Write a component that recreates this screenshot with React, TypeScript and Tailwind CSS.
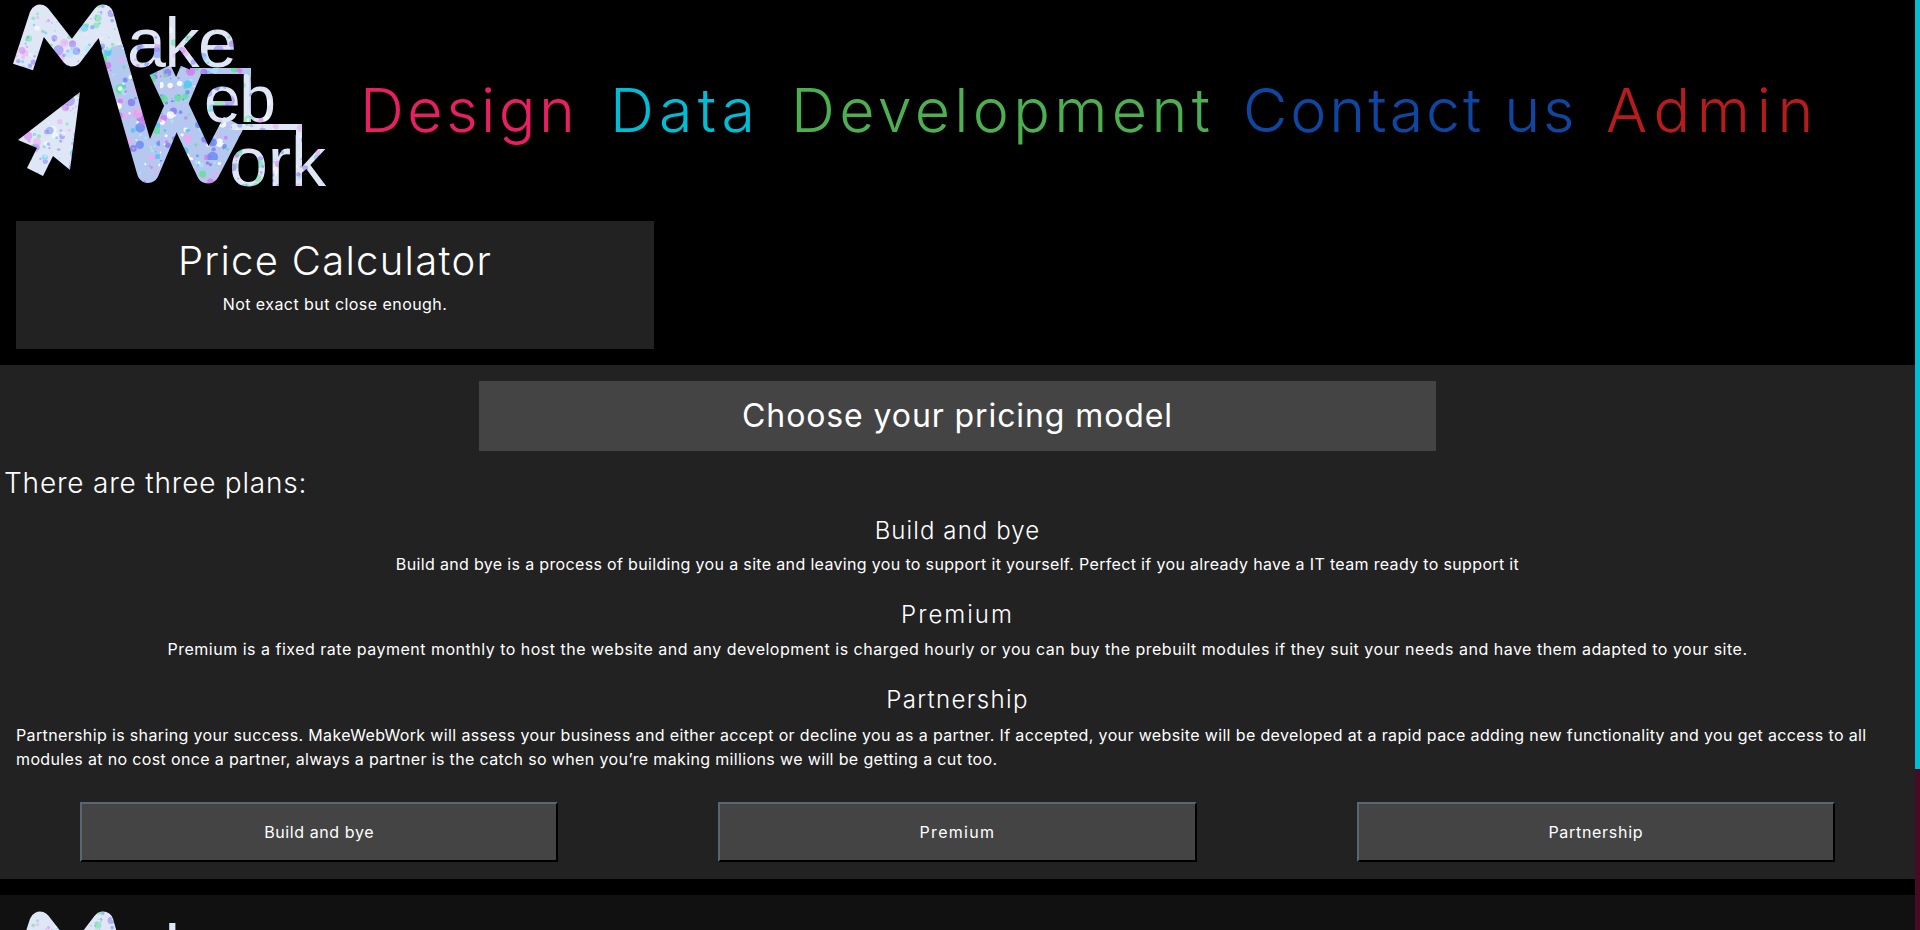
import { useId } from "react";

const navItems = [
  { label: "Design", color: "text-[#e91e63]", width: "w-[250px]", spacing: "tracking-[3.45px]" },
  { label: "Data", color: "text-[#00bcd4]", width: "w-[181px]", spacing: "tracking-[5.15px]" },
  { label: "Development", color: "text-[#4caf50]", width: "w-[452px]", spacing: "tracking-[4.3px]" },
  { label: "Contact us", color: "text-[#0d47a1]", width: "w-[363px]", spacing: "tracking-[2.9px]" },
  { label: "Admin", color: "text-[#b71c1c]", width: "w-[206px]", spacing: "tracking-[6.65px]" },
];

const plans = [
  { label: "Build and bye", spacing: "tracking-[0.6px]" },
  { label: "Premium", spacing: "tracking-[1.3px]" },
  { label: "Partnership", spacing: "tracking-[0.7px]" },
];

// deterministic paint speckle for the logo fill
const speckColors = ["#6f8cf5", "#5fe39a", "#d77cf0", "#4fc8f5", "#8a7cf5", "#ffffff", "#a9e8f5", "#f0a8f0"];
const noise = (n: number) => {
  const v = Math.sin(n * 12.9898) * 43758.5453;
  return v - Math.floor(v);
};
const specks = Array.from({ length: 520 }, (_, i) => ({
  x: noise(i + 1) * 160,
  y: noise(i + 1000) * 160,
  r: 0.7 + noise(i + 2000) * noise(i + 3000) * 5,
  color: speckColors[Math.floor(noise(i + 4000) * speckColors.length)],
}));

function Logo() {
  const id = useId();
  const fill = `url(#${id})`;
  const denseFill = `url(#${id}-dense)`;
  return (
    <svg width="330" height="192" viewBox="0 0 330 192" className="shrink-0 block">
      <defs>
        <pattern id={id} width="160" height="160" patternUnits="userSpaceOnUse">
          <rect width="160" height="160" fill="#dfe7f7" />
          {specks.map((s, i) => (
            <circle key={i} cx={s.x} cy={s.y} r={s.r} fill={s.color} opacity="0.55" />
          ))}
        </pattern>
        <pattern id={`${id}-dense`} width="160" height="160" patternUnits="userSpaceOnUse">
          <rect width="160" height="160" fill="#b4c8f0" />
          {specks.map((s, i) => (
            <circle key={i} cx={s.y} cy={s.x} r={s.r} fill={s.color} opacity="0.85" />
          ))}
        </pattern>
      </defs>
      <polyline
        points="23,67 40,15 72,56 103,15 115,57"
        fill="none"
        stroke={fill}
        strokeWidth="21"
        strokeLinejoin="round"
      />
      <polyline
        points="112,47 148,172 191,70"
        fill="none"
        stroke={denseFill}
        strokeWidth="22"
        strokeLinejoin="round"
      />
      <polyline
        points="160,70 208,172 234,122"
        fill="none"
        stroke={denseFill}
        strokeWidth="23"
        strokeLinejoin="round"
      />
      <polyline points="190,71 248,71 248,122" fill="none" stroke={denseFill} strokeWidth="6" />
      <polyline points="232,127 299,127 299,186" fill="none" stroke={fill} strokeWidth="6" />
      <polygon points="80,92 70,170 53,156 43,176 27,168 37,148 18,140" fill={fill} />
      <g fontFamily="'Liberation Sans', sans-serif" fill={fill}>
        <text x="127" y="67" fontSize="70" textLength="110">ake</text>
        <text x="204" y="122" fontSize="66" textLength="72">eb</text>
        <text x="229" y="186" fontSize="70" textLength="97">ork</text>
      </g>
    </svg>
  );
}

export default function App() {
  return (
    <div className="flex h-[930px] w-full overflow-hidden bg-black text-white font-['Inter','Noto_Sans',sans-serif]">
      <div className="flex-1 min-w-0">
        <header className="flex h-[192px] items-start">
          <Logo />
          <nav className="flex items-start pl-[30px] pt-[72px]">
            {navItems.map((item) => (
              <a key={item.label} className={`${item.width} ${item.color} ${item.spacing} text-[61px] leading-[76px] font-light whitespace-nowrap`}>
                {item.label}
              </a>
            ))}
          </nav>
        </header>

        <div className="px-4 pt-[29px] pb-4">
          <div className="w-[638px] h-[128px] bg-[#222222] pt-[17px] text-center">
            <h1 className="text-[40px] leading-[46px] font-light tracking-[1.3px]">Price Calculator</h1>
            <p className="mt-[8px] text-[16px] leading-[24px] tracking-[0.45px]">Not exact but close enough.</p>
          </div>
        </div>

        <section className="bg-[#222222] h-[514px] pt-4">
          <div className="mx-auto w-[957px] h-[70px] bg-[#444444] flex items-center justify-center text-[32px] font-normal tracking-[0.9px]">
            Choose your pricing model
          </div>
          <h2 className="mt-[14px] pl-1 text-[28px] leading-[36px] font-light tracking-[0.8px]">There are three plans:</h2>

          <h3 className="mt-[12px] text-center text-[24px] leading-[36px] font-light tracking-[1.1px]">Build and bye</h3>
          <p className="text-center text-[16px] leading-[30px] tracking-[0.34px]">
            Build and bye is a process of building you a site and leaving you to support it yourself. Perfect if you already have a IT team ready to support it
          </p>

          <h3 className="mt-[18px] text-center text-[24px] leading-[36px] font-light tracking-[2px]">Premium</h3>
          <p className="mt-[1px] text-center text-[16px] leading-[30px] tracking-[0.5px]">
            Premium is a fixed rate payment monthly to host the website and any development is charged hourly or you can buy the prebuilt modules if they suit your needs and have them adapted to your site.
          </p>

          <h3 className="mt-[18px] text-center text-[24px] leading-[36px] font-light tracking-[1.35px]">Partnership</h3>
          <p className="mt-[5px] px-4 text-[16px] leading-[24px] tracking-[0.36px]">
            Partnership is sharing your success. MakeWebWork will assess your business and either accept or decline you as a partner. If accepted, your website will be developed at a rapid pace adding new functionality and you get access to all modules at no cost once a partner, always a partner is the catch so when you’re making millions we will be getting a cut too.
          </p>

          <div className="mt-[31px] grid grid-cols-3 px-[80px] gap-[160px]">
            {plans.map((plan) => (
              <button key={plan.label} className={`${plan.spacing} h-[60px] bg-[#444444] text-[16px] border-2 border-t-[#5b6675] border-l-[#5b6675] border-r-black border-b-black`}>
                {plan.label}
              </button>
            ))}
          </div>
        </section>

        <section className="mt-4 bg-[#111111] h-[200px] pt-[12px]">
          <Logo />
        </section>
      </div>
      <aside className="w-[5px] shrink-0 bg-[#4a0a23]">
        <div className="h-[769px] bg-[#00bcd4]" />
      </aside>
    </div>
  );
}
